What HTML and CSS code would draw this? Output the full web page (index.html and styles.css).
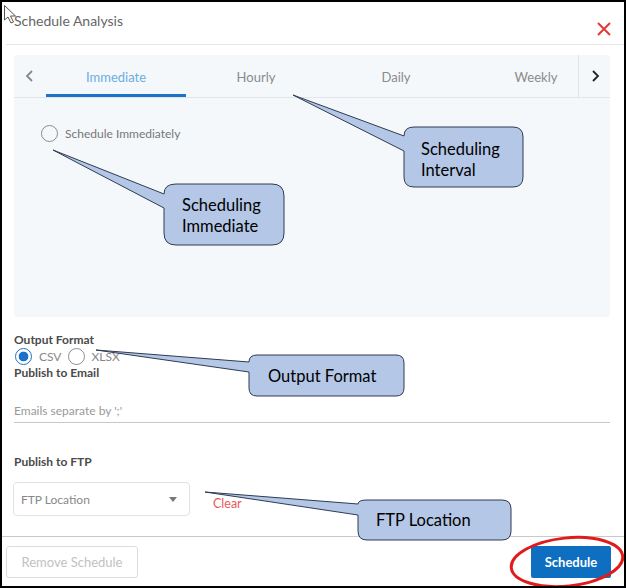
FILE: index.html
```html
<!DOCTYPE html>
<html>
<head>
<meta charset="utf-8">
<link rel="stylesheet" href="styles.css">
</head>
<body>
<div class="frame">
  <div class="header">
    <div class="title">Schedule Analysis</div>
    <svg class="close" width="14" height="14" viewBox="0 0 14 14"><path d="M1 1L13 13M13 1L1 13" stroke="#e53935" stroke-width="2" fill="none"/></svg>
  </div>
  <div class="content">
    <div class="panel">
      <div class="tabrow">
        <div class="nav nav-left"><svg width="10" height="14" viewBox="0 0 10 14"><path d="M7 2L2 7L7 12" stroke="#888" stroke-width="1.8" fill="none"/></svg></div>
        <div class="tabs">
          <div class="tab active">Immediate</div>
          <div class="tab">Hourly</div>
          <div class="tab">Daily</div>
          <div class="tab">Weekly</div>
        </div>
        <div class="nav nav-right"><svg width="10" height="14" viewBox="0 0 10 14"><path d="M3 2L8 7L3 12" stroke="#222" stroke-width="1.8" fill="none"/></svg></div>
      </div>
      <div class="panel-body">
        <label class="radio-line"><span class="radio"></span><span class="radio-text">Schedule Immediately</span></label>
      </div>
    </div>
    <div class="label first">Output Format</div>
    <div class="radios">
      <span class="radio checked"></span><span class="opt">CSV</span>
      <span class="radio"></span><span class="opt">XLSX</span>
    </div>
    <div class="label">Publish to Email</div>
    <div class="email">Emails separate by ';'</div>
    <div class="label ftp">Publish to FTP</div>
    <div class="ftp-row">
      <div class="select"><span>FTP Location</span><span class="caret"></span></div>
      <span class="clear">Clear</span>
    </div>
  </div>
  <div class="footer">
    <button class="btn btn-remove">Remove Schedule</button>
    <button class="btn btn-schedule">Schedule</button>
  </div>
  <svg class="overlay" width="626" height="588" viewBox="0 0 626 588">
    <path class="cursor" d="M4.5 5.5L4.5 20L8 17L11 23L13.5 22L10.5 16L15.5 16Z"/>
    <path class="callout" d="M176 184H272Q284 184 284 196V233Q284 245 272 245H176Q164 245 164 233V208L53 150L164 194Q164 184 176 184Z"/>
    <text class="ctext" x="182" y="211">Scheduling</text>
    <text class="ctext" x="182" y="232">Immediate</text>
    <path class="callout" d="M414 127H513Q523 127 523 137V177Q523 187 513 187H414Q404 187 404 177V151L293 95L404 136Q404 127 414 127Z"/>
    <text class="ctext" x="421" y="155">Scheduling</text>
    <text class="ctext" x="421" y="176">Interval</text>
    <path class="callout" d="M257 355H396Q404 355 404 363V388Q404 396 396 396H257Q249 396 249 388V372L96 350L249 362Q249 355 257 355Z"/>
    <text class="ctext" x="268" y="382">Output Format</text>
    <path class="callout" d="M367 500H502Q511 500 511 509V531Q511 540 502 540H367Q358 540 358 531V515L205 492L358 504Q358 500 367 500Z"/>
    <text class="ctext" x="376" y="526">FTP Location</text>
    <ellipse class="ring" cx="567" cy="562" rx="56" ry="24" transform="rotate(-6 567 562)"/>
  </svg>
</div>
</body>
</html>
```
FILE: styles.css
```css
* { box-sizing: border-box; }
html, body { margin: 0; padding: 0; background: #fff; }
.frame {
  position: relative;
  width: 626px;
  height: 588px;
  border: 2px solid #000;
  background: #fff;
  font-family: Lato, "Open Sans", sans-serif;
  display: flex;
  flex-direction: column;
  overflow: hidden;
}
.header {
  height: 43px;
  margin-left: 4px;
  padding: 0 13px 0 8px;
  border-bottom: 1px solid #e6e6e6;
  display: flex;
  justify-content: space-between;
  align-items: flex-start;
  flex: none;
}
.title {
  margin-top: 10px;
  font-size: 14px;
  line-height: 18px;
  color: #666;
}
.close { margin-top: 20px; }
.content {
  padding: 10px 14px 0 12px;
  flex: 1;
  display: flex;
  flex-direction: column;
}
.panel {
  height: 262px;
  background: #f5f8fb;
  border-radius: 4px;
  flex: none;
}
.tabrow {
  height: 43px;
  display: flex;
  border-bottom: 1px solid #e2e6ea;
}
.nav {
  width: 32px;
  flex: none;
  display: flex;
  align-items: center;
  justify-content: center;
}
.nav-right { border-left: 1px solid #e0e3e6; }
.tabs {
  flex: 1;
  display: flex;
  overflow: hidden;
}
.tab {
  width: 140px;
  flex: none;
  text-align: center;
  font-size: 13px;
  line-height: 44px;
  color: #8a8a8a;
}
.tab.active {
  color: #6aaee0;
  border-bottom: 3px solid #1a73c8;
  height: 42px;
}
.panel-body { padding: 27px 27px; }
.radio-line { display: flex; align-items: center; }
.radio {
  display: inline-block;
  width: 17px;
  height: 17px;
  border: 1.5px solid #8c8c8c;
  border-radius: 50%;
  background: transparent;
  flex: none;
}
.radio.checked {
  border: 1.5px solid #1a73c8;
  background: radial-gradient(circle, #1a73c8 0 4.5px, #fff 5.2px);
}
.radio-text {
  margin-left: 7px;
  font-size: 12px;
  color: #777;
}
.label {
  font-size: 12px;
  font-weight: bold;
  line-height: 14px;
  color: #4a4a4a;
}
.label.first { margin-top: 16px; }
.radios {
  display: flex;
  align-items: center;
  height: 19px;
  margin-left: 1px;
}
.opt {
  font-size: 12px;
  color: #888;
  margin: 0 6px 0 7px;
}
.email {
  margin-top: 17px;
  height: 26px;
  line-height: 28px;
  font-size: 12px;
  color: #999;
  border-bottom: 1px solid #c8c8c8;
}
.label.ftp { margin-top: 32px; }
.ftp-row {
  margin-top: 13px;
  display: flex;
  align-items: flex-start;
}
.select {
  margin-left: -1px;
  width: 177px;
  height: 34px;
  border: 1px solid #e2e2e2;
  border-radius: 4px;
  background: #fff;
  display: flex;
  align-items: center;
  justify-content: space-between;
  padding: 0 12px 0 7px;
  font-size: 12px;
  color: #888;
}
.caret {
  width: 0;
  height: 0;
  border-left: 4.5px solid transparent;
  border-right: 4.5px solid transparent;
  border-top: 5px solid #777;
}
.clear {
  margin-left: 23px;
  margin-top: 14px;
  font-size: 12.5px;
  color: #e8595a;
}
.footer {
  height: 50px;
  flex: none;
  border-top: 1px solid #c9c9c9;
  padding: 9px 13px 0 4px;
  display: flex;
  justify-content: space-between;
  align-items: flex-start;
}
.btn {
  height: 32px;
  font-family: Lato, "Open Sans", sans-serif;
  font-size: 13px;
  border-radius: 3px;
}
.btn-remove {
  width: 132px;
  background: #fff;
  border: 1px solid #dcdcdc;
  color: #c2c2c2;
}
.btn-schedule {
  width: 80px;
  background: #0e6fc0;
  border: none;
  border-radius: 2px;
  color: #fff;
  font-weight: bold;
}
.overlay {
  position: absolute;
  top: -2px;
  left: -2px;
  pointer-events: none;
}
.cursor { fill: #fff; stroke: #555; stroke-width: 1; }
.callout { fill: #b4c7e7; stroke: #2e3b52; stroke-width: 1; }
.ctext { font-family: Lato, sans-serif; font-size: 16.5px; fill: #000; }
.ring { fill: none; stroke: #e01b1b; stroke-width: 3; }
```
